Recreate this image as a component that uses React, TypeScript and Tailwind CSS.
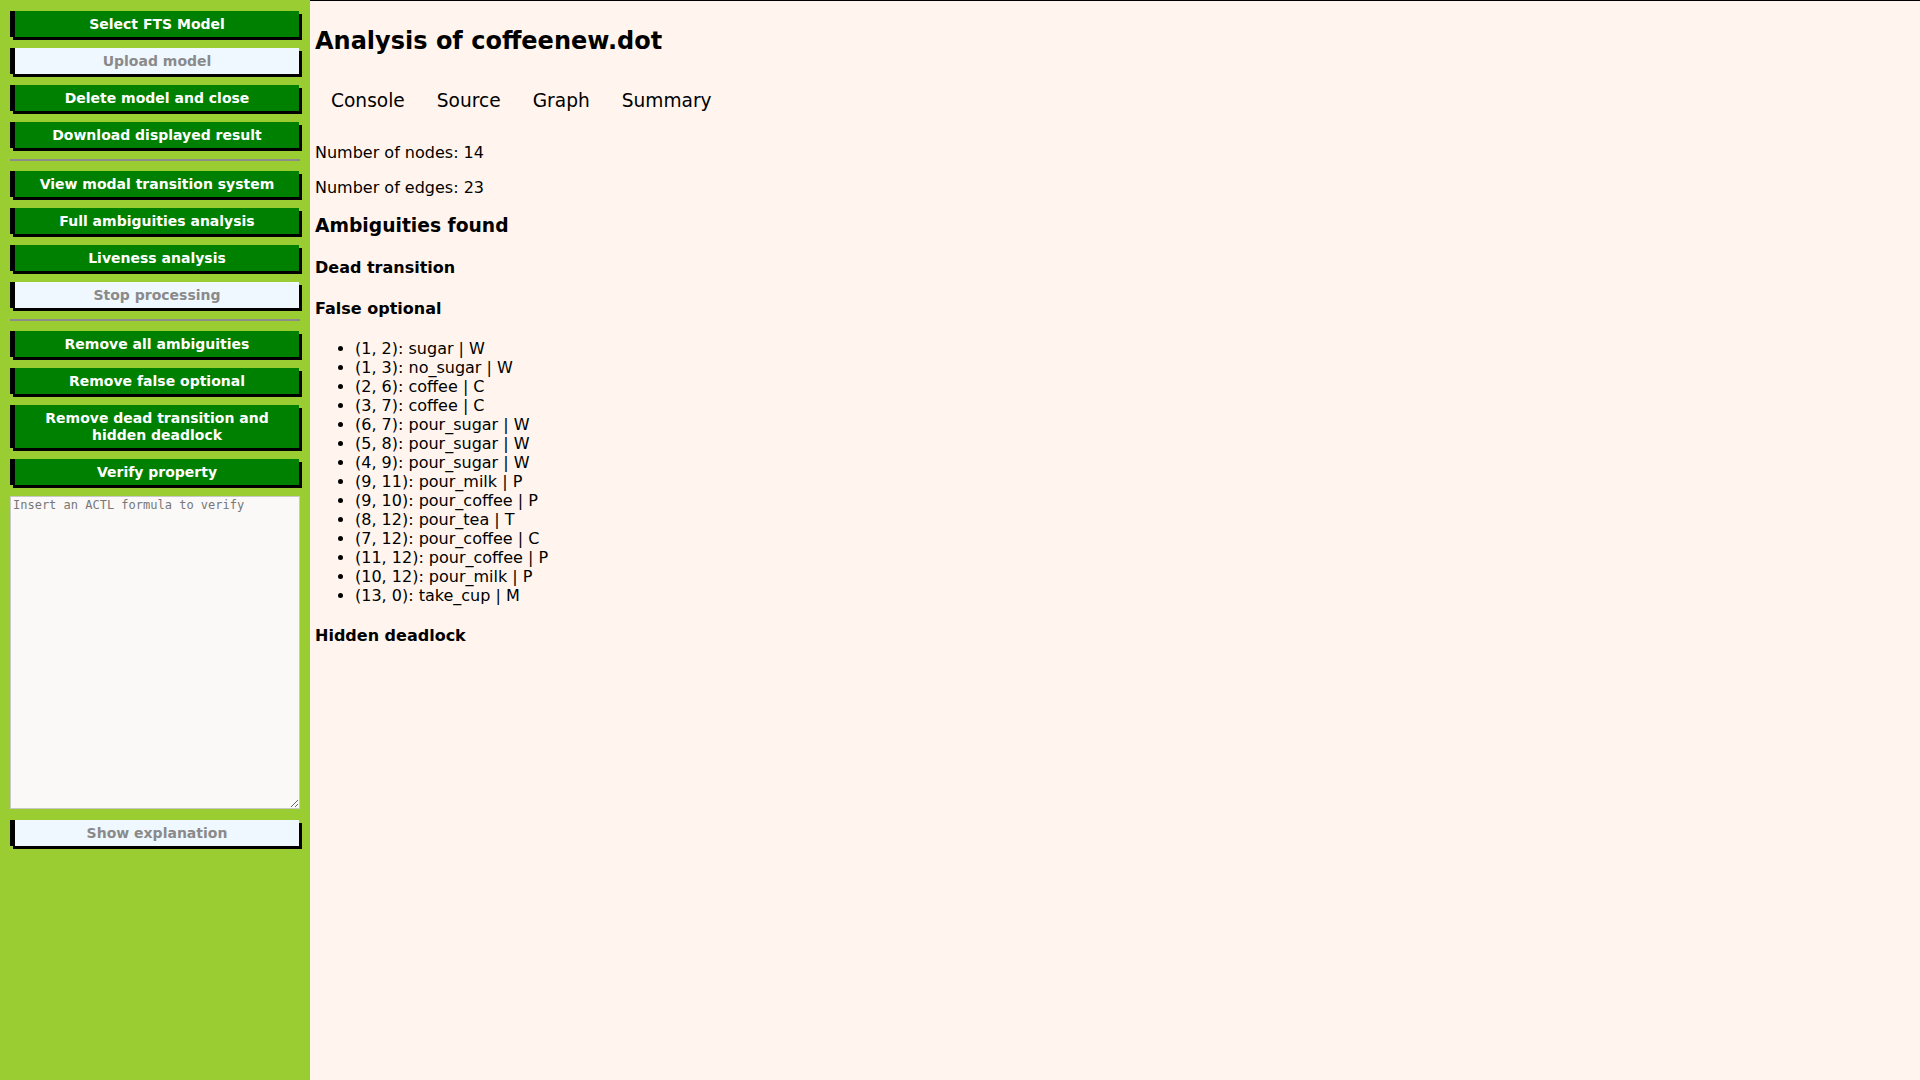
import React from "react";

const greenBtn =
  "block w-[289px] mb-[11px] border-l-[5px] border-black bg-[#008000] text-white font-bold text-[14px] leading-[16px] py-[5px] text-center shadow-[3px_3px_0_#000]";
const lightBtn =
  "block w-[289px] mb-[11px] border-l-[5px] border-black bg-[#f0f8ff] text-[#8a8a8a] font-bold text-[14px] leading-[16px] py-[5px] text-center shadow-[3px_3px_0_#000]";

const items = [
  "(1, 2): sugar | W",
  "(1, 3): no_sugar | W",
  "(2, 6): coffee | C",
  "(3, 7): coffee | C",
  "(6, 7): pour_sugar | W",
  "(5, 8): pour_sugar | W",
  "(4, 9): pour_sugar | W",
  "(9, 11): pour_milk | P",
  "(9, 10): pour_coffee | P",
  "(8, 12): pour_tea | T",
  "(7, 12): pour_coffee | C",
  "(11, 12): pour_coffee | P",
  "(10, 12): pour_milk | P",
  "(13, 0): take_cup | M",
];

const tab = "px-[16px] pt-[14.5px] pb-[15.5px] text-[18.6px] leading-[21.5px]";

export default function App() {
  return (
    <div
      className="flex min-h-screen w-full"
      style={{ fontFamily: '"DejaVu Sans", sans-serif' }}
    >
      <div className="w-[310px] shrink-0 bg-[#9acd32] pt-[11px] pl-[10px]">
        <button className={greenBtn}>Select FTS Model</button>
        <button className={lightBtn}>Upload model</button>
        <button className={greenBtn}>Delete model and close</button>
        <button className={greenBtn}>Download displayed result</button>
        <div className="w-[290px] h-[2px] bg-[#8c8c8c] mb-[10px]" />
        <button className={greenBtn}>View modal transition system</button>
        <button className={greenBtn}>Full ambiguities analysis</button>
        <button className={greenBtn}>Liveness analysis</button>
        <button className={lightBtn}>Stop processing</button>
        <div className="w-[290px] h-[2px] bg-[#8c8c8c] mb-[10px]" />
        <button className={greenBtn}>Remove all ambiguities</button>
        <button className={greenBtn}>Remove false optional</button>
        <button className="block w-[289px] mb-[11px] border-l-[5px] border-black bg-[#008000] text-white font-bold text-[14px] leading-[16.5px] py-[5px] text-center shadow-[3px_3px_0_#000]">
          Remove dead transition and
          <br />
          hidden deadlock
        </button>
        <button className={greenBtn}>Verify property</button>
        <textarea
          className="block w-[290px] h-[313px] mb-[11px] border border-[#c8c8c8] bg-[#faf9f8] px-[2px] py-[1px] text-[12px] leading-[14px] text-black placeholder:text-[#777777]"
          style={{ fontFamily: '"DejaVu Sans Mono", monospace' }}
          placeholder="Insert an ACTL formula to verify"
        />
        <button className={lightBtn}>Show explanation</button>
      </div>
      <div className="flex-1 bg-[#fff5ee] border-t border-black pt-[5px] px-[5px] text-black">
        <h2 className="text-[24px] font-bold leading-[28px] mt-[21px] mb-[20px]">
          Analysis of coffeenew.dot
        </h2>
        <div className="flex">
          <button className={tab}>Console</button>
          <button className={tab}>Source</button>
          <button className={tab}>Graph</button>
          <button className={tab}>Summary</button>
        </div>
        <p className="text-[16px] leading-[19px] my-[16px]">Number of nodes: 14</p>
        <p className="text-[16px] leading-[19px] my-[16px]">Number of edges: 23</p>
        <h3 className="text-[18.72px] font-bold leading-[22px] my-[18.72px]">Ambiguities found</h3>
        <h4 className="text-[16px] font-bold leading-[19px] my-[21.28px]">Dead transition</h4>
        <h4 className="text-[16px] font-bold leading-[19px] my-[21.28px]">False optional</h4>
        <ul className="list-disc pl-[40px] my-[16px] text-[16px] leading-[19px]">
          {items.map((t) => (
            <li key={t}>{t}</li>
          ))}
        </ul>
        <h4 className="text-[16px] font-bold leading-[19px] my-[21.28px]">Hidden deadlock</h4>
      </div>
    </div>
  );
}
